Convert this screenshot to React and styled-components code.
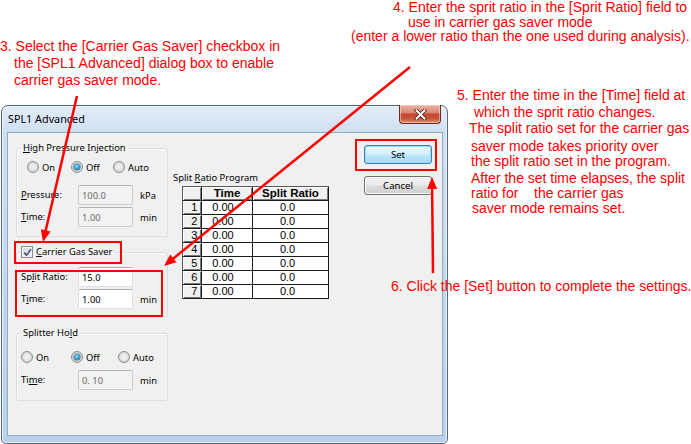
import React from 'react';
import styled, { createGlobalStyle, css } from 'styled-components';

const UI = `"Noto Sans", "Liberation Sans", Arial, sans-serif`;

const Global = createGlobalStyle`
  html, body { margin: 0; padding: 0; background: #fff; }
  body { font-family: "Liberation Sans", Arial, sans-serif; }
  * { box-sizing: border-box; }
`;

const Page = styled.div`
  position: relative;
  width: 691px;
  height: 444px;
  overflow: hidden;
  background: #fff;
  padding: 105px 0 0 1px;
`;

/* ---------- window frame ---------- */
const Window = styled.div`
  width: 447px;
  height: 339px;
  border: 1px solid #56677a;
  border-radius: 7px 7px 5px 5px;
  background: linear-gradient(180deg, #e3edf8 0px, #cfe0f2 26px, #c0d6ed 60%, #b9d1ea 100%);
  box-shadow: inset 0 0 0 1px #eaf2fb;
  padding: 0 4px 7px 5px;
  display: flex;
  flex-direction: column;
`;

const TitleBar = styled.div`
  height: 26px;
  flex: none;
  display: flex;
  align-items: center;
  justify-content: space-between;
  padding-left: 1px;
`;

const Title = styled.span`
  font-family: ${UI};
  font-size: 10.8px;
  color: #000;
  line-height: 14px;
`;

const CloseButton = styled.div`
  align-self: flex-start;
  margin-top: -1px;
  margin-right: 2px;
  width: 42px;
  height: 19px;
  border: 1px solid #6b2a20;
  border-top: none;
  border-radius: 0 0 4px 4px;
  background: linear-gradient(180deg, #eab2a4 0%, #d98a75 42%, #c5462e 50%, #c8553a 75%, #e0906e 100%);
  box-shadow: inset 0 0 0 1px rgba(255, 220, 210, 0.55);
  display: flex;
  align-items: center;
  justify-content: center;
`;

const Client = styled.div`
  flex: 1;
  background: #f0f0f0;
  border: 1px solid #95aac0;
  display: flex;
  align-items: flex-start;
  padding: 8px 0 0 8px;
  font-family: ${UI};
  font-size: 9.4px;
  color: #000;
`;

/* ---------- left column ---------- */
const LeftColumn = styled.div`
  width: 152px;
  display: flex;
  flex-direction: column;
`;

const Group = styled.fieldset`
  margin: ${p => p.$mt || 0}px 0 0 0;
  min-width: 0;
  width: 152px;
  padding: ${p => p.$pt}px 0 ${p => p.$pb}px 4px;
  border: 1px solid #d5dfe5;
  border-radius: 3px;
  box-shadow: inset 1px 1px 0 #fff;
`;

const Legend = styled.legend`
  padding: 0 ${p => (p.$flush ? '2px 0 0' : '2px')};
  margin: 0;
  height: 14px;
  line-height: 14px;
  display: flex;
  align-items: center;
  gap: 3px;
`;

const RadioRow = styled.div`
  display: flex;
  align-items: center;
  height: 14px;
  margin-left: ${p => p.$ml}px;
`;

const RadioItem = styled.label`
  display: inline-flex;
  align-items: center;
  gap: 3px;
  width: ${p => (p.$w ? `${p.$w}px` : 'auto')};
`;

const RadioDot = styled.span`
  position: relative;
  width: 12px;
  height: 12px;
  flex: none;
  border-radius: 50%;
  border: 1px solid #8c8f91;
  background: radial-gradient(circle at 50% 50%, #f6f6f6 0, #e6e6e6 3px, #d2d2d2 5px, #f2f2f2 6px);
  ${p =>
    p.$on &&
    css`
      &::after {
        content: '';
        position: absolute;
        left: 2px;
        top: 2px;
        width: 6px;
        height: 6px;
        border-radius: 50%;
        background: radial-gradient(circle at 45% 40%, #a4e2fd 0, #3b9fd8 45%, #175a8f 100%);
        box-shadow: 0 0 0 0.5px #2b5676;
      }
    `}
`;

const CheckBox = styled.span`
  width: 12px;
  height: 12px;
  flex: none;
  border: 1px solid #8c8f91;
  background: linear-gradient(135deg, #d8d8d8 0%, #eaeaea 60%, #f8f8f8 100%);
  box-shadow: inset 0 0 0 1px #f4f4f4;
  display: flex;
  align-items: center;
  justify-content: center;
`;

const FieldGrid = styled.div`
  display: grid;
  grid-template-columns: 57px 55px auto;
  row-gap: 2px;
  align-items: center;
  margin-top: ${p => p.$mt || 0}px;
`;

const FieldLabel = styled.span`
  line-height: 14px;
`;

const TextBox = styled.input`
  width: 55px;
  height: 20px;
  margin: 0;
  padding: 0 0 0 3px;
  font-family: ${UI};
  font-size: 9.4px;
  color: #000;
  background: #fff;
  border: 1px solid #dbdfe6;
  border-top-color: #abadb3;
  border-radius: 2px;
  outline: none;
  &:disabled {
    color: #6d6d6d;
    background: #f2f2f2;
    border-color: #c9ccd0;
    border-top-color: #afb2b6;
  }
`;

const Unit = styled.span`
  padding-left: 7px;
`;

/* ---------- middle column ---------- */
const ProgramColumn = styled.div`
  width: 156px;
  margin-left: 5px;
  padding-top: 30px;
  display: flex;
  flex-direction: column;
`;

const ProgramLabel = styled.span`
  line-height: 14px;
  height: 15px;
`;

const Grid = styled.table`
  margin-left: 9px;
  border-spacing: 0;
  border-top: 1px solid #5a5a5a;
  border-left: 1px solid #5a5a5a;
  font-family: "Liberation Sans Narrow", "Liberation Sans", Arial, sans-serif;
  font-size: 11px;
  color: #000;
  td, th {
    padding: 0;
    height: 13px;
    line-height: 13px;
    border-right: 1px solid #1a1a1a;
    border-bottom: 1px solid #1a1a1a;
  }
`;

const HeadCell = styled.th`
  width: ${p => p.$w}px;
  background: #f0f0f0;
  box-shadow: inset 1px 1px 0 #fff, inset -1px -1px 0 #7a7a7a;
  font-family: "Liberation Sans", Arial, sans-serif;
  font-weight: bold;
  font-size: 11.5px;
  text-align: center;
`;

const IndexCell = styled.td`
  background: #f0f0f0;
  box-shadow: inset 1px 1px 0 #fff, inset -1px -1px 0 #7a7a7a;
  text-align: right;
  padding-right: 4px !important;
`;

const DataCell = styled.td`
  background: #fff;
  text-align: left;
  padding-left: ${p => p.$pl}px !important;
`;

/* ---------- buttons ---------- */
const ButtonColumn = styled.div`
  margin-left: 35px;
  padding-top: 4px;
  display: flex;
  flex-direction: column;
  gap: 12px;
`;

const Button = styled.button`
  width: 68px;
  height: 19px;
  margin: 0;
  padding: 0;
  font-family: ${UI};
  font-size: 9.6px;
  color: #000;
  border-radius: 3px;
  border: 1px solid #707070;
  background: linear-gradient(180deg, #f2f2f2 0%, #ebebeb 48%, #dddddd 52%, #cfcfcf 100%);
  box-shadow: inset 0 0 0 1px #fbfbfb;
  ${p =>
    p.$default &&
    css`
      border-color: #3c7fb1;
      background: linear-gradient(180deg, #eaf6fd 0%, #d9f0fc 48%, #bee6fd 52%, #a7d9f5 100%);
      box-shadow: inset 0 0 0 1px #9cdcf9;
    `}
`;

/* ---------- annotations ---------- */
const Callout = styled.div`
  position: absolute;
  left: ${p => p.$x}px;
  top: ${p => p.$y}px;
  font-family: "Liberation Sans", Arial, sans-serif;
  font-size: 14px;
  color: #ff0000;
  white-space: pre;
`;

const CalloutLine = styled.div`
  padding-left: ${p => p.$indent || 0}px;
  margin-top: ${p => p.$mt || 0}px;
  height: ${p => p.$lh}px;
  line-height: ${p => p.$lh}px;
`;

const Overlay = styled.svg`
  position: absolute;
  left: 0;
  top: 0;
  pointer-events: none;
`;

const callouts = [
  {
    x: 0,
    y: 38,
    lh: 17,
    lines: [
      [0, 0, '3. Select the [Carrier Gas Saver] checkbox in'],
      [14, 0, 'the [SPL1 Advanced] dialog box to enable'],
      [14, 0, 'carrier gas saver mode.'],
    ],
  },
  {
    x: 350,
    y: 0,
    lh: 14.5,
    lines: [
      [43, 0, '4. Enter the sprit ratio in the [Sprit Ratio] field to'],
      [58, 0, 'use in carrier gas saver mode'],
      [1, 0, '(enter a lower ratio than the one used during analysis).'],
    ],
  },
  {
    x: 457,
    y: 87,
    lh: 16,
    lines: [
      [0, 0, '5. Enter the time in the [Time] field at'],
      [17, 1, 'which the sprit ratio changes.'],
      [12, 0, 'The split ratio set for the carrier gas'],
      [14, 2, 'saver mode takes priority over'],
      [14, -1, 'the split ratio set in the program.'],
      [14, 1, 'After the set time elapses, the split'],
      [14, -1, 'ratio for    the carrier gas'],
      [15, -1, 'saver mode remains set.'],
    ],
  },
  {
    x: 391,
    y: 278,
    lh: 16,
    lines: [[0, 0, '6. Click the [Set] button to complete the settings.']],
  },
];

const arrowHead = (tx, ty, fx, fy, len = 12, half = 5) => {
  const dx = tx - fx;
  const dy = ty - fy;
  const d = Math.hypot(dx, dy);
  const ux = dx / d;
  const uy = dy / d;
  const bx = tx - ux * len;
  const by = ty - uy * len;
  const px = -uy * half;
  const py = ux * half;
  return `${tx},${ty} ${bx + px},${by + py} ${bx - px},${by - py}`;
};

const arrows = [
  { fx: 77, fy: 96, tx: 43, ty: 242 },
  { fx: 410, fy: 67, tx: 164, ty: 266 },
  { fx: 433, fy: 273, tx: 432, ty: 177 },
];

const rows = [1, 2, 3, 4, 5, 6, 7];

const Radio = ({ on, w, children }) => (
  <RadioItem $w={w}>
    <RadioDot $on={on} />
    {children}
  </RadioItem>
);

export default function App() {
  return (
    <>
      <Global />
      <Page>
        <Window>
          <TitleBar>
            <Title>SPL1 Advanced</Title>
            <CloseButton>
              <svg width="13" height="11" viewBox="0 0 13 11">
                <path d="M2.5 1.5 L10.5 9.5 M10.5 1.5 L2.5 9.5" stroke="#4a1a12" strokeWidth="3.6" strokeLinecap="square" />
                <path d="M2.5 1.5 L10.5 9.5 M10.5 1.5 L2.5 9.5" stroke="#ffffff" strokeWidth="2" strokeLinecap="square" />
              </svg>
            </CloseButton>
          </TitleBar>
          <Client>
            <LeftColumn>
              <Group $pt={5} $pb={9}>
                <Legend>
                  <span>
                    <u>H</u>igh Pressure Injection
                  </span>
                </Legend>
                <RadioRow $ml={6}>
                  <Radio w={44}>On</Radio>
                  <Radio w={42} on>
                    Off
                  </Radio>
                  <Radio>Auto</Radio>
                </RadioRow>
                <FieldGrid $mt={11}>
                  <FieldLabel>
                    <u>P</u>ressure:
                  </FieldLabel>
                  <TextBox disabled defaultValue="100.0" />
                  <Unit>kPa</Unit>
                  <FieldLabel>
                    <u>T</u>ime:
                  </FieldLabel>
                  <TextBox disabled defaultValue="1.00" />
                  <Unit>min</Unit>
                </FieldGrid>
              </Group>

              <Group $mt={8} $pt={8} $pb={7}>
                <Legend $flush>
                  <CheckBox>
                    <svg width="9" height="9" viewBox="0 0 9 9">
                      <path d="M1.2 4.6 L3.5 7.2 L7.9 1.3" stroke="#43588a" strokeWidth="1.7" fill="none" />
                    </svg>
                  </CheckBox>
                  <span>
                    <u>C</u>arrier Gas Saver
                  </span>
                </Legend>
                <FieldGrid>
                  <FieldLabel>
                    Sp<u>l</u>it Ratio:
                  </FieldLabel>
                  <TextBox defaultValue="15.0" />
                  <span />
                  <FieldLabel>
                    T<u>i</u>me:
                  </FieldLabel>
                  <TextBox defaultValue="1.00" />
                  <Unit>min</Unit>
                </FieldGrid>
              </Group>

              <Group $mt={9} $pt={10} $pb={10}>
                <Legend>
                  <span>
                    Splitter Ho<u>l</u>d
                  </span>
                </Legend>
                <RadioRow $ml={0}>
                  <Radio w={50}>On</Radio>
                  <Radio w={47} on>
                    Off
                  </Radio>
                  <Radio>Auto</Radio>
                </RadioRow>
                <FieldGrid $mt={6}>
                  <FieldLabel>
                    Ti<u>m</u>e:
                  </FieldLabel>
                  <TextBox disabled defaultValue="0. 10" />
                  <Unit>min</Unit>
                </FieldGrid>
              </Group>
            </LeftColumn>

            <ProgramColumn>
              <ProgramLabel>
                Split <u>R</u>atio Program
              </ProgramLabel>
              <Grid>
                <thead>
                  <tr>
                    <HeadCell $w={19} />
                    <HeadCell $w={50}>Time</HeadCell>
                    <HeadCell $w={75}>Split Ratio</HeadCell>
                  </tr>
                </thead>
                <tbody>
                  {rows.map(n => (
                    <tr key={n}>
                      <IndexCell>{n}</IndexCell>
                      <DataCell $pl={10}>0.00</DataCell>
                      <DataCell $pl={27}>0.0</DataCell>
                    </tr>
                  ))}
                </tbody>
              </Grid>
            </ProgramColumn>

            <ButtonColumn>
              <Button $default>Set</Button>
              <Button>Cancel</Button>
            </ButtonColumn>
          </Client>
        </Window>

        {callouts.map((c, i) => (
          <Callout key={i} $x={c.x} $y={c.y}>
            {c.lines.map(([indent, mt, text], j) => (
              <CalloutLine key={j} $indent={indent} $mt={mt} $lh={c.lh}>
                {text}
              </CalloutLine>
            ))}
          </Callout>
        ))}

        <Overlay width="691" height="444" viewBox="0 0 691 444">
          <rect x="15" y="242" width="106" height="21" fill="none" stroke="#ff0000" strokeWidth="2" />
          <rect x="16" y="271" width="146" height="45" fill="none" stroke="#ff0000" strokeWidth="2" />
          <rect x="356" y="140" width="80" height="30" fill="none" stroke="#ff0000" strokeWidth="2" />
          {arrows.map((a, i) => {
            const d = Math.hypot(a.tx - a.fx, a.ty - a.fy);
            const ex = a.tx - ((a.tx - a.fx) / d) * 10;
            const ey = a.ty - ((a.ty - a.fy) / d) * 10;
            return (
              <g key={i}>
                <line x1={a.fx} y1={a.fy} x2={ex} y2={ey} stroke="#ff0000" strokeWidth="2.5" />
                <polygon points={arrowHead(a.tx, a.ty, a.fx, a.fy)} fill="#ff0000" />
              </g>
            );
          })}
        </Overlay>
      </Page>
    </>
  );
}
